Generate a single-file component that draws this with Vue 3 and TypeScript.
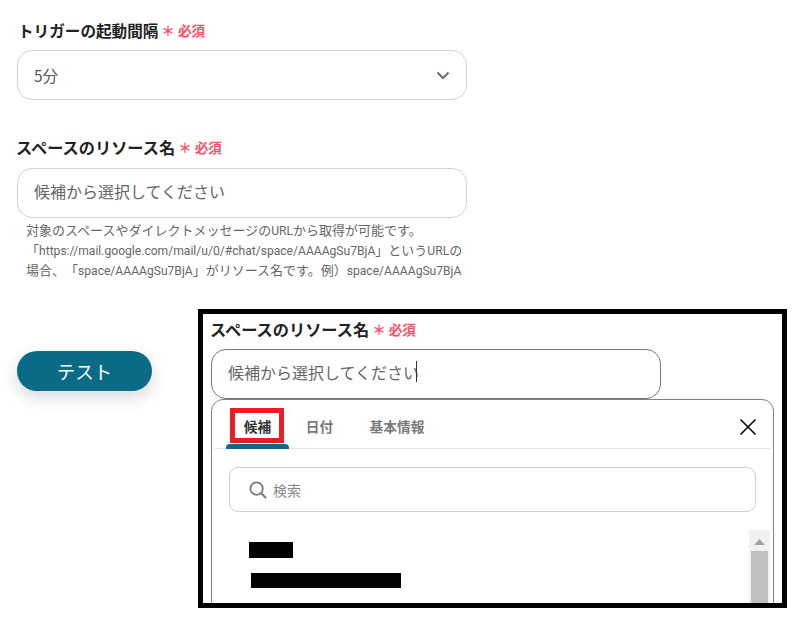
<script setup lang="ts">
const tabs: string[] = ['候補', '日付', '基本情報']
</script>

<template>
  <div class="page">
    <div class="field first">
      <div class="label"><span class="name">トリガーの起動間隔</span><span class="req">＊ 必須</span></div>
      <div class="box select">
        <span>5分</span>
        <svg class="chev" width="14" height="9" viewBox="0 0 14 9"><path d="M1.5 1.5 7 7l5.5-5.5" fill="none" stroke="#707070" stroke-width="2.2" /></svg>
      </div>
    </div>
    <div class="field second">
      <div class="label wide"><span class="name">スペースのリソース名</span><span class="req">＊ 必須</span></div>
      <div class="box input">候補から選択してください</div>
      <p class="help">対象のスペースやダイレクトメッセージの<span>URL</span>から取得が可能です。<br />「<span>https://mail.google.com/mail/u/0/#chat/space/AAAAgSu7BjA</span>」という<span>URL</span>の<br />場合、「<span>space/AAAAgSu7BjA</span>」がリソース名です。例）<span>space/AAAAgSu7BjA</span></p>
    </div>
    <button class="test">テスト</button>

    <div class="shot">
      <div class="label wide"><span class="name">スペースのリソース名</span><span class="req">＊ 必須</span></div>
      <div class="box input active">候補から選択してください<i class="caret"></i></div>
      <div class="panel">
        <div class="tabs">
          <div v-for="(t, i) in tabs" :key="t" class="tab" :class="{ on: i === 0 }">{{ t }}</div>
          <svg class="close" width="18" height="18" viewBox="0 0 18 18"><path d="M1.5 1.5l15 15M16.5 1.5l-15 15" stroke="#111" stroke-width="1.7" fill="none" /></svg>
        </div>
        <div class="search">
          <svg width="18" height="18" viewBox="0 0 18 18"><circle cx="7.6" cy="7.6" r="6.2" fill="none" stroke="#777" stroke-width="1.8" /><path d="M12.2 12.2 17 17" stroke="#777" stroke-width="2" fill="none" /></svg>
          <span>検索</span>
        </div>
        <div class="list">
          <div class="items">
            <div class="mask a"></div>
            <div class="mask b"></div>
          </div>
          <div class="scroll">
            <svg width="11" height="6" viewBox="0 0 11 6"><path d="M5.5 0 11 6H0z" fill="#a3a3a3" /></svg>
            <div class="thumb"></div>
          </div>
        </div>
      </div>
      <div class="redbox"></div>
    </div>
  </div>
</template>

<style>
html, body { margin: 0; background: #fff; }
</style>

<style scoped>
.page {
  position: relative;
  width: 806px;
  height: 627px;
  overflow: hidden;
  box-sizing: border-box;
  padding: 18px 0 0 17px;
  font-family: "Noto Sans CJK JP", "Noto Sans", sans-serif;
  color: #333;
}
.field { width: 450px; }
.second { margin-top: 35px; }
.label { display: flex; align-items: center; height: 23px; margin-bottom: 9px; white-space: nowrap; }
.first .label { padding-left: 1px; }
.wide { margin-left: -1px; margin-bottom: 10px; }
.name { font-size: 15.6px; font-weight: 700; color: #222; }
.wide .name { font-size: 16.2px; }
.req { font-size: 13.5px; font-weight: 700; color: #ff4d62; margin-left: 3px; }
.box {
  box-sizing: border-box;
  height: 50px;
  border: 1px solid #cfd3d8;
  border-radius: 15px;
  display: flex;
  align-items: center;
  padding: 0 16px;
  background: #fff;
}
.select { font-size: 15.5px; color: #555; justify-content: space-between; }
.input { font-size: 16px; color: #666; padding-bottom: 5px; }
.help {
  margin: 3px 0 0;
  padding-left: 9px;
  font-family: Roboto, "Noto Sans CJK JP", sans-serif;
  font-size: 13px;
  line-height: 19px;
  color: #666;
  white-space: nowrap;
  text-spacing-trim: space-all;
}
.help span { font-size: 12.1px; }
.test {
  display: block;
  margin-top: 70px;
  width: 135px;
  height: 40px;
  border: 0;
  border-radius: 20px;
  background: #0b6a85;
  color: #fff;
  font: 400 18.5px "Noto Sans CJK JP", sans-serif;
  box-shadow: 0 6px 16px rgba(40, 60, 80, .2);
}
.shot {
  position: absolute;
  left: 198px;
  top: 309px;
  width: 589px;
  height: 299px;
  box-sizing: border-box;
  border: 5px solid #000;
  background: #fff;
  overflow: hidden;
  padding: 3px 0 0 8px;
}
.shot .wide { margin-bottom: 9px; }
.active { width: 450px; border-color: #777; color: #666; }
.caret { display: inline-block; width: 1px; height: 21px; margin-left: -3px; background: #333; }
.panel {
  box-sizing: border-box;
  width: 563px;
  height: 240px;
  border: 1px solid #808080;
  border-radius: 12px;
  padding: 0 3px;
}
.tabs {
  position: relative;
  display: flex;
  align-items: center;
  height: 48px;
  border-bottom: 1px solid #e2e2e2;
  padding-left: 11px;
}
.tab { flex: none; width: 63px; margin-right: 8px; text-align: center; font-size: 13.7px; font-weight: 700; color: #7a7a7a; position: relative; align-self: stretch; line-height: 52px; }
.tab:nth-child(2) { width: 45px; margin-right: 27px; }
.tab:nth-child(3) { width: 56px; }
.tab.on { color: #333; }
.tab.on::after {
  content: "";
  position: absolute;
  left: 0;
  right: 0;
  bottom: -1px;
  height: 5px;
  border-radius: 4px 4px 0 0;
  background: #0b6a85;
}
.close { margin-left: auto; margin-right: 13px; margin-top: 6px; }
.search {
  box-sizing: border-box;
  margin: 18px 0 0 14px;
  width: 527px;
  height: 45px;
  border: 1px solid #cfcfcf;
  border-radius: 9px;
  display: flex;
  align-items: center;
  gap: 6px;
  padding-left: 19px;
  font-size: 14px;
  color: #8a8a8a;
}
.list { display: flex; justify-content: space-between; margin-top: 18px; }
.items { padding: 12px 0 0 34px; }
.mask { background: #000; }
.mask.a { width: 44px; height: 16px; }
.mask.b { width: 150px; height: 15px; margin: 15px 0 0 2px; }
.scroll {
  width: 21px;
  height: 80px;
  background: #f1f1f1;
  display: flex;
  flex-direction: column;
  align-items: center;
  padding-top: 9px;
  box-sizing: border-box;
}
.thumb { width: 17px; flex: 1; background: #c0c0c0; margin-top: 6px; }
.redbox {
  position: absolute;
  left: 27px;
  top: 94px;
  width: 54px;
  height: 35px;
  box-sizing: border-box;
  border: 5px solid #ed1c24;
}
</style>
